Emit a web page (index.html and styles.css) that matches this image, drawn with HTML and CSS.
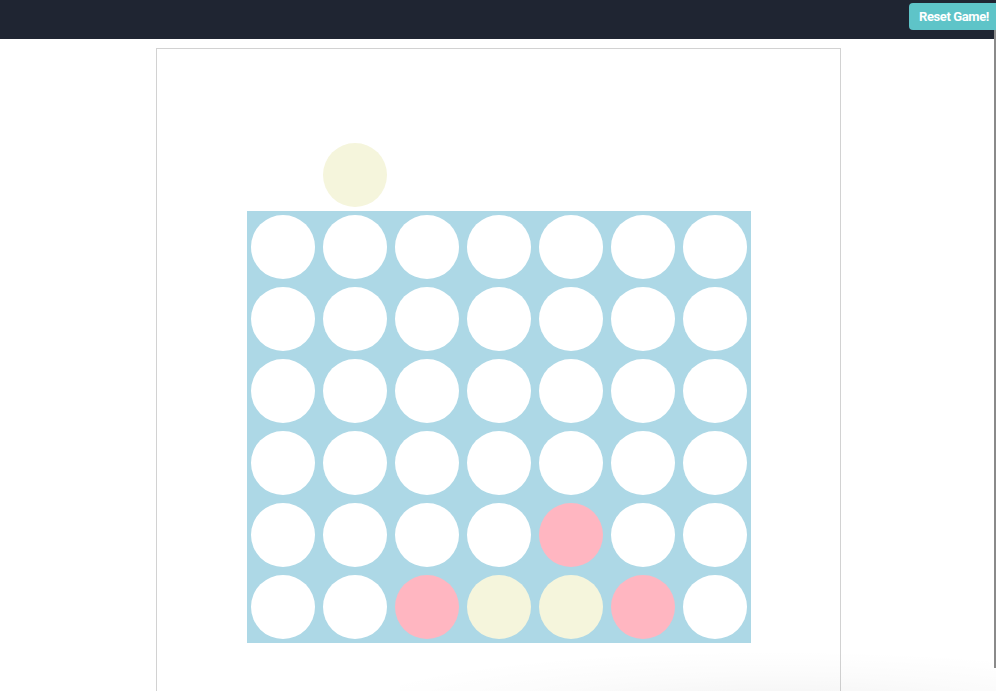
FILE: index.html
```html
<!DOCTYPE html>
<html>
<head>
<meta charset="utf-8">
<link rel="stylesheet" href="styles.css">
</head>
<body>
<header class="topbar">
  <button class="reset">Reset Game!</button>
</header>
<main class="frame">
  <div class="preview">
    <span class="slot"></span><span class="slot"><i class="disc beige"></i></span><span class="slot"></span><span class="slot"></span><span class="slot"></span><span class="slot"></span><span class="slot"></span>
  </div>
  <div class="board">
    <i class="disc"></i><i class="disc"></i><i class="disc"></i><i class="disc"></i><i class="disc"></i><i class="disc"></i><i class="disc"></i>
    <i class="disc"></i><i class="disc"></i><i class="disc"></i><i class="disc"></i><i class="disc"></i><i class="disc"></i><i class="disc"></i>
    <i class="disc"></i><i class="disc"></i><i class="disc"></i><i class="disc"></i><i class="disc"></i><i class="disc"></i><i class="disc"></i>
    <i class="disc"></i><i class="disc"></i><i class="disc"></i><i class="disc"></i><i class="disc"></i><i class="disc"></i><i class="disc"></i>
    <i class="disc"></i><i class="disc"></i><i class="disc"></i><i class="disc"></i><i class="disc pink"></i><i class="disc"></i><i class="disc"></i>
    <i class="disc"></i><i class="disc"></i><i class="disc pink"></i><i class="disc beige"></i><i class="disc beige"></i><i class="disc pink"></i><i class="disc"></i>
  </div>
</main>
<div class="scrollthumb"></div>
<div class="shade"></div>
</body>
</html>
```
FILE: styles.css
```css
html, body {
  margin: 0;
  padding: 0;
  background: #ffffff;
  overflow: hidden;
  height: 691px;
}
body {
  font-family: Roboto, "Liberation Sans", sans-serif;
  position: relative;
}
.topbar {
  height: 39px;
  background: #1f2532;
  display: flex;
  justify-content: flex-end;
  align-items: flex-start;
  padding-top: 3px;
  box-sizing: border-box;
}
.reset {
  margin: 0;
  border: none;
  background: #5ec4c8;
  color: #ffffff;
  font-family: Roboto, "Liberation Sans", sans-serif;
  font-weight: 700;
  font-size: 13px;
  letter-spacing: -0.4px;
  height: 27px;
  width: 87px;
  padding: 0 0 0 10px;
  border-radius: 4px 0 0 4px;
  text-align: left;
}
.frame {
  width: 685px;
  height: 700px;
  margin: 9px auto 0;
  border: 1px solid #d2d2d2;
  box-sizing: border-box;
  padding: 90px 0 0 1px;
  display: flex;
  flex-direction: column;
  align-items: center;
}
.preview {
  display: grid;
  grid-template-columns: repeat(7, 72px);
  height: 72px;
}
.slot {
  display: flex;
  align-items: center;
  justify-content: center;
}
.board {
  display: grid;
  grid-template-columns: repeat(7, 72px);
  grid-auto-rows: 72px;
  background: #add8e6;
  width: 504px;
}
.disc {
  display: block;
  width: 64px;
  height: 64px;
  border-radius: 50%;
  background: #ffffff;
  margin: 4px;
}
.disc.pink { background: #ffb6c1; }
.disc.beige { background: #f5f5dc; }
.scrollthumb {
  position: absolute;
  left: 994px;
  top: 30px;
  width: 2px;
  height: 638px;
  background: #8a8a8a;
}
.shade {
  position: absolute;
  left: 400px;
  top: 650px;
  width: 620px;
  height: 60px;
  pointer-events: none;
  background: radial-gradient(ellipse 70% 100% at 60% 100%, rgba(0,0,0,0.05), rgba(0,0,0,0.015) 60%, rgba(0,0,0,0) 100%);
}
```
